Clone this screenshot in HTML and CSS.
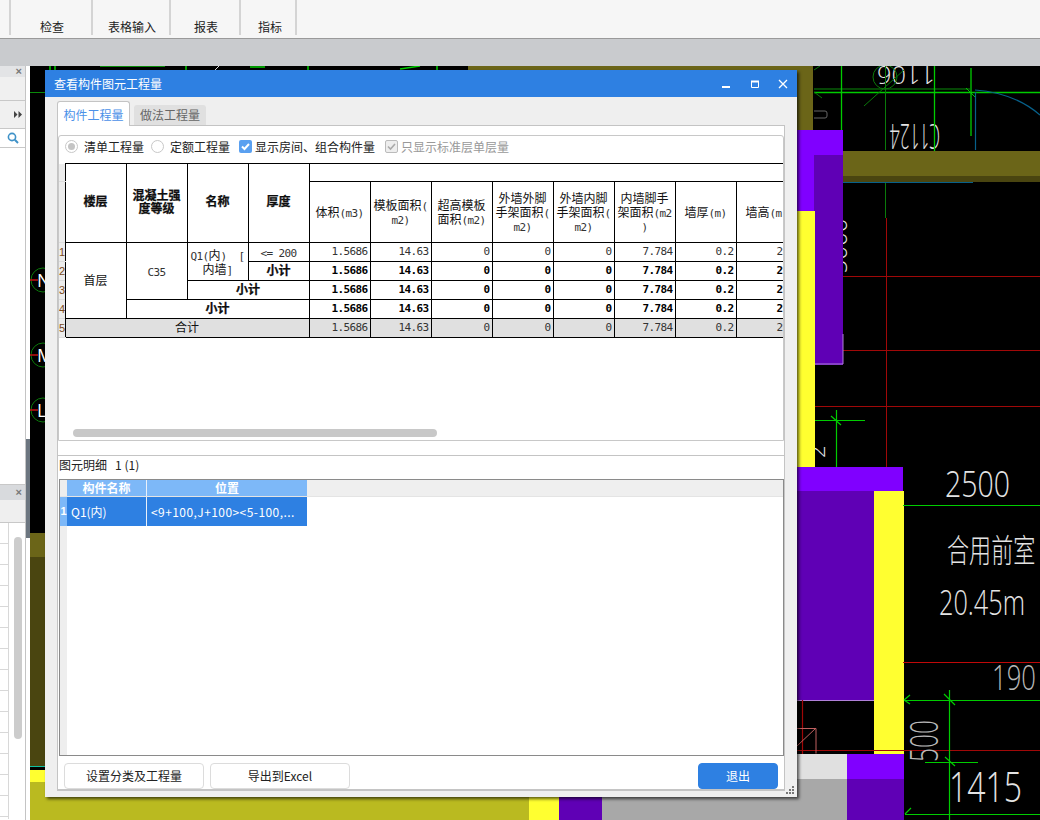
FILE: index.html
```html
<!DOCTYPE html>
<html lang="zh-CN">
<head>
<meta charset="utf-8">
<title>查看构件图元工程量</title>
<link rel="stylesheet" href="styles.css">
</head>
<body>
<div class="app">
  <header class="toolbar">
    <div class="tool-group g1">检查</div>
    <div class="tool-group g2">表格输入</div>
    <div class="tool-group g3">报表</div>
    <div class="tool-group g4">指标</div>
  </header>
  <div class="graybar"></div>
  <main class="workspace">
    <aside class="sidebar">
      <div class="side-top">
        <div class="side-head"><span class="side-x">×</span></div>
        <div class="side-blank"></div>
        <div class="side-arrows"><svg width="8" height="7" viewBox="0 0 8 7"><path d="M0 0l3.500 3.500L0 7zM4.500 0L8 3.500 4.500 7z" fill="#444"/></svg></div>
        <div class="side-search"><svg width="12" height="12" viewBox="0 0 12 12"><circle cx="5" cy="5" r="3.600" fill="none" stroke="#3f92c8" stroke-width="1.600"/><path d="M7.800 7.800l3.200 3.200" stroke="#3f92c8" stroke-width="2"/></svg></div>
      </div>
      <div class="side-bottom">
        <div class="side-head"><span class="side-x">×</span></div>
        <div class="side-blank2"></div>
        <div class="side-grid"><div class="side-thumb"></div></div>
      </div>
    </aside>
    <div class="strip"><div class="strip-handle"></div></div>
    <svg class="cad" viewBox="30 66 1010 754" width="1010" height="754">
      <rect x="30" y="66" width="1010" height="754" fill="#000"/>
      <!-- bottom-left fills -->
      <rect x="30" y="533" width="30" height="24" fill="#6b6518"/>
      <rect x="30" y="557" width="30" height="209" fill="#4a4510"/>
      <rect x="30" y="766" width="30" height="1" fill="#10c0a0"/>
      <rect x="30" y="770" width="30" height="12" fill="#ffff30"/>
      <rect x="30" y="782" width="500" height="38" fill="#baba20"/>
      <rect x="529" y="790" width="30" height="30" fill="#ffff30"/>
      <rect x="559" y="790" width="43" height="30" fill="#5f00b5"/>
      <rect x="602" y="779" width="245" height="41" fill="#a8a8a8"/>
      <rect x="780" y="754" width="67" height="25" fill="#e0e0e0"/>
      <!-- top strip -->
      <rect x="468" y="66" width="345" height="64" fill="#6b6518"/>
      <path d="M30 92.500h20M100 66.500h65" stroke="#0a8a0a" stroke-width="1"/>
      <path d="M50 66v4M55 66v4M186 66v4M308 66v4M437 66v4M250 67h15M400 69l20-3" stroke="#0c0" stroke-width="1.500"/>
      <path d="M215 70l4-4" stroke="#ddd"/>
      <!-- axis bubbles on the left -->
      <g fill="none" stroke="#0a7a0a" stroke-width="1">
        <circle cx="43" cy="280" r="12"/><circle cx="43" cy="355" r="12"/><circle cx="43" cy="410" r="12"/>
      </g>
      <path d="M30 280h8M30 355h8M30 410h8" stroke="#c01010" stroke-width="1.500"/>
      <g class="cad-l" font-size="18"><text x="37" y="287">N</text><text x="37" y="362">M</text><text x="37" y="417">L</text></g>
      <!-- top right linework -->
      <text class="cad-t" font-size="26" transform="rotate(180 906 75)" x="877" y="84" textLength="58" lengthAdjust="spacingAndGlyphs">1106</text>
      <text class="cad-t" font-size="34" transform="rotate(180 915 138)" x="890" y="152" textLength="50" lengthAdjust="spacingAndGlyphs">C1124</text>
      <path d="M814 89h156" stroke="#0a8a0a" stroke-width="1"/>
      <path d="M814 92.500h226M841.500 66v64M934.500 66v85M971 68v68" stroke="#0c0" stroke-width="1.300"/>
      <path d="M885.500 66v84M885.500 182v36M864 106l40-36M814 70l6-4M814 92l8 6" stroke="#0a7a0a" stroke-width="1"/>
      <circle cx="885" cy="77" r="12" fill="none" stroke="#0a7a0a"/>
      <path d="M966 88l10 10" stroke="#0c0"/>
      <path d="M975.500 92v58M975 90c28 2 50 12 65 25M843 182.500h130" fill="none" stroke="#07608a" stroke-width="1.200"/>
      <path d="M814 111h11a2 2 0 0 1 2 2v3a2 2 0 0 1-2 2h-11" fill="none" stroke="#666" stroke-width="1"/>
      <!-- red grid -->
      <path d="M843 276.500h197M843 350.500h197M815 406.500h225M886.500 218v249" stroke="#a00808" stroke-width="1"/>
      <path d="M836.500 410v57M815 420.500h50M831 416l10 9" stroke="#0c0" stroke-width="1.200"/>
      <text class="cad-t" font-size="24" transform="rotate(-90 847 246)" x="847" y="246" text-anchor="middle">5000</text>
      <text class="cad-t" font-size="22" transform="rotate(-90 825 458)" x="825" y="458">2</text>
      <!-- columns and walls -->
      <rect x="843" y="151" width="197" height="25" fill="#6b6518"/>
      <rect x="843" y="176" width="197" height="6" fill="#4a4510"/>
      <rect x="780" y="130" width="63" height="25" fill="#8000ff"/>
      <rect x="780" y="155" width="34" height="57" fill="#8000ff"/>
      <rect x="814" y="155" width="29" height="210" fill="#5f00b5"/>
      <path d="M815 364h28v-30" fill="none" stroke="#b080d8"/>
      <rect x="780" y="211" width="35" height="256" fill="#ffff30"/>
      <rect x="780" y="467" width="123" height="24" fill="#8000ff"/>
      <rect x="780" y="491" width="94" height="209" fill="#5f00b5"/>
      <path d="M780 700.500h95" stroke="#b080d8"/>
      <rect x="874" y="491" width="30" height="263" fill="#ffff30"/>
      <!-- lower linework -->
      <path d="M802.500 700v54M797 750.500h243" stroke="#a00808" stroke-width="1.200"/>
      <path d="M797 728.500h19v25M797 746l19-18" fill="none" stroke="#c06060"/>
      <path d="M903 662.500h137" stroke="#c00808" stroke-width="1.200"/>
      <path d="M903 505.500h137M904 700.500h136M949.500 690v130M925 762.500h53M905 814.500h135M944 694l11 11M945 757l10 9M904 700l6-5M904 700l6 4M905 814l6-6" stroke="#0c0" stroke-width="1.200" fill="none"/>
      <rect x="847" y="754" width="57" height="25" fill="#8000ff"/>
      <rect x="847" y="779" width="57" height="41" fill="#5f00b5"/>
      <!-- labels -->
      <text class="cad-t" font-size="36" x="945" y="497" textLength="65" lengthAdjust="spacingAndGlyphs">2500</text>
      <text class="cad-cn" font-size="23" transform="translate(947 562) scale(0.96 1.400)">合用前室</text>
      <text class="cad-t" font-size="34" x="939" y="615" textLength="86" lengthAdjust="spacingAndGlyphs">20.45m</text>
      <text class="cad-t dim" font-size="34" x="992" y="690" textLength="44" lengthAdjust="spacingAndGlyphs">190</text>
      <text class="cad-t dim" font-size="38" transform="rotate(-90 938 762)" x="938" y="762" textLength="42" lengthAdjust="spacingAndGlyphs">500</text>
      <text class="cad-t" font-size="42" x="949" y="802" textLength="73" lengthAdjust="spacingAndGlyphs">1415</text>
    </svg>
  </main>

  <section class="dialog">
    <div class="titlebar">
      <span class="title">查看构件图元工程量</span>
      <div class="win-btns">
        <svg width="10" height="10" viewBox="0 0 10 10"><path d="M0 8h8" stroke="#fff" stroke-width="2"/></svg>
        <svg width="10" height="10" viewBox="0 0 10 10"><path d="M1.500 2.500h7v6h-7z" fill="none" stroke="#fff"/><path d="M1 2.500h8" stroke="#fff" stroke-width="2"/></svg>
        <svg width="10" height="10" viewBox="0 0 10 10"><path d="M1 1l8 8M9 1L1 9" stroke="#fff" stroke-width="1.300"/></svg>
      </div>
    </div>
    <div class="dialog-body">
      <div class="tabs">
        <div class="tab active">构件工程量</div>
        <div class="tab">做法工程量</div>
      </div>
      <div class="outer">
        <div class="upper">
          <div class="options">
            <span class="radio on"></span><span class="opt o1">清单工程量</span>
            <span class="radio"></span><span class="opt o2">定额工程量</span>
            <span class="check"><svg width="13" height="13" viewBox="0 0 13 13"><path d="M3 6.500l2.500 2.500L10 4" fill="none" stroke="#fff" stroke-width="2"/></svg></span><span class="opt o3">显示房间、组合构件量</span>
            <span class="check off"><svg width="13" height="13" viewBox="0 0 13 13"><path d="M3 6.500l2.500 2.500L10 4" fill="none" stroke="#aaa" stroke-width="1.600"/></svg></span><span class="opt disabled">只显示标准层单层量</span>
          </div>
          <div class="table-wrap">
            <table class="qty">
              <colgroup><col class="c-rh"><col span="12" class="c-d"></colgroup>
              <thead>
                <tr class="r-top">
                  <th class="rh"></th>
                  <th rowspan="2" class="hb">楼层</th>
                  <th rowspan="2" class="hb">混凝土强<br>度等级</th>
                  <th rowspan="2" class="hb">名称</th>
                  <th rowspan="2" class="hb">厚度</th>
                  <th colspan="8"></th>
                </tr>
                <tr class="r-head">
                  <th class="rh"></th>
                  <th>体积<span class="lat">(m3)</span></th>
                  <th>模板面积<span class="lat">(</span><br><span class="lat">m2)</span></th>
                  <th>超高模板<br>面积<span class="lat">(m2)</span></th>
                  <th>外墙外脚<br>手架面积<span class="lat">(</span><br><span class="lat">m2)</span></th>
                  <th>外墙内脚<br>手架面积<span class="lat">(</span><br><span class="lat">m2)</span></th>
                  <th>内墙脚手<br>架面积<span class="lat">(m2</span><br><span class="lat">)</span></th>
                  <th>墙厚<span class="lat">(m)</span></th>
                  <th>墙高<span class="lat">(m)</span></th>
                </tr>
              </thead>
              <tbody>
                <tr>
                  <td class="rh">1</td>
                  <td rowspan="4" class="floor">首层</td>
                  <td rowspan="3" class="c"><span class="lat">C35</span></td>
                  <td rowspan="2" class="c name"><span class="lat">Q1(</span>内<span class="lat">)  [</span><br>内墙<span class="lat">]</span></td>
                  <td class="c"><span class="lat">&lt;= 200</span></td>
                  <td class="n">1.5686</td><td class="n">14.63</td><td class="n">0</td><td class="n">0</td><td class="n">0</td><td class="n">7.784</td><td class="n">0.2</td><td class="n">2.8</td>
                </tr>
                <tr class="sum">
                  <td class="rh">2</td>
                  <td class="c hb">小计</td>
                  <td class="n">1.5686</td><td class="n">14.63</td><td class="n">0</td><td class="n">0</td><td class="n">0</td><td class="n">7.784</td><td class="n">0.2</td><td class="n">2.8</td>
                </tr>
                <tr class="sum">
                  <td class="rh">3</td>
                  <td colspan="2" class="c hb">小计</td>
                  <td class="n">1.5686</td><td class="n">14.63</td><td class="n">0</td><td class="n">0</td><td class="n">0</td><td class="n">7.784</td><td class="n">0.2</td><td class="n">2.8</td>
                </tr>
                <tr class="sum">
                  <td class="rh">4</td>
                  <td colspan="3" class="c hb">小计</td>
                  <td class="n">1.5686</td><td class="n">14.63</td><td class="n">0</td><td class="n">0</td><td class="n">0</td><td class="n">7.784</td><td class="n">0.2</td><td class="n">2.8</td>
                </tr>
                <tr class="total">
                  <td class="rh">5</td>
                  <td colspan="4" class="c label">合计</td>
                  <td class="n">1.5686</td><td class="n">14.63</td><td class="n">0</td><td class="n">0</td><td class="n">0</td><td class="n">7.784</td><td class="n">0.2</td><td class="n">2.8</td>
                </tr>
              </tbody>
            </table>
          </div>
          <div class="hscroll"><div class="hthumb"></div></div>
        </div>
        <div class="lower">
          <div class="lower-label">图元明细&nbsp;&nbsp; 1 (1)</div>
          <div class="detail">
            <div class="d-head">
              <div class="d-rh"></div>
              <div class="d-c1">构件名称</div>
              <div class="d-c2">位置</div>
            </div>
            <div class="d-row">
              <div class="d-rh sel">1</div>
              <div class="d-c1 l">Q1(内)</div>
              <div class="d-c2 l pos">&lt;9+100,J+100&gt;&lt;5-100,...</div>
            </div>
            <div class="d-fill"><div class="d-rh"></div></div>
          </div>
        </div>
        <div class="footer">
          <button class="btn">设置分类及工程量</button>
          <button class="btn">导出到Excel</button>
          <button class="btn primary">退出</button>
        </div>
      </div>
    </div>
    <svg class="grip" width="9" height="9" viewBox="0 0 9 9"><path d="M6 0h2v2H6zM3 3h2v2H3zM6 3h2v2H6zM0 6h2v2H0zM3 6h2v2H3zM6 6h2v2H6z" fill="#777"/></svg>
  </section>
</div>
</body>
</html>
```
FILE: styles.css
```css
* { box-sizing: border-box; }
html, body { margin: 0; padding: 0; }
body { font-family: "Noto Sans CJK SC", "Noto Sans", sans-serif; font-size: 12px; color: #222; }
.app { position: relative; width: 1040px; height: 820px; overflow: hidden; display: flex; flex-direction: column; background: #fff; }

/* toolbar */
.toolbar { height: 39px; flex: none; display: flex; padding-left: 9px; background: #f6f6f6; border-bottom: 1px solid #9a9a9a; }
.tool-group { height: 35px; border-left: 2px solid #d4d4d4; padding-left: 2px; display: flex; align-items: flex-end; justify-content: center; line-height: 16px; color: #222; }
.g1 { width: 82px; } .g2 { width: 78px; } .g3 { width: 70px; }
.g4 { width: 58px; border-right: 2px solid #d4d4d4; padding-left: 4px; }
.graybar { height: 27px; flex: none; background: #c9cbce; }
.workspace { flex: 1; display: flex; min-height: 0; }

/* sidebar */
.sidebar { width: 26px; flex: none; display: flex; flex-direction: column; border-right: 1px solid #c4c4c4; background: #fff; }
.side-top { height: 418px; flex: none; }
.side-head { height: 11px; background: #e3e4e6; display: flex; justify-content: flex-end; align-items: center; padding-right: 3px; }
.side-x { font: bold 11px/11px "Liberation Sans", sans-serif; color: #777; }
.side-blank { height: 24px; background: #f0f0f0; border-bottom: 1px solid #c8c8c8; }
.side-arrows { height: 28px; background: #f0f0f0; border-bottom: 1px solid #c8c8c8; display: flex; align-items: center; justify-content: flex-end; padding-right: 3px; }
.side-search { height: 19px; background: #fff; border-bottom: 1px solid #c8c8c8; display: flex; align-items: center; justify-content: flex-end; padding-right: 6px; }
.side-bottom { flex: 1; border-top: 1px solid #c8c8c8; }
.side-bottom .side-head { height: 15px; background: #d8dadd; }
.side-blank2 { height: 23px; background: #efefef; border-bottom: 1px solid #c8c8c8; }
.side-grid { position: relative; height: 296px; background: repeating-linear-gradient(to bottom, transparent 0, transparent 20px, #d8d8d8 20px, #d8d8d8 21px) 0 0 / 8px 100% no-repeat, linear-gradient(#d8d8d8, #d8d8d8) 8px 0 / 1px 100% no-repeat; }
.side-thumb { position: absolute; left: 14px; top: 14px; width: 8px; height: 202px; border-radius: 4px; background: #cccccc; }
.strip { width: 4px; flex: none; background: #fff; position: relative; }
.strip-handle { position: absolute; left: 0; top: 373px; width: 4px; height: 99px; background: #6c7680; }
.cad { display: block; flex: none; }
.cad-t { font-family: "Open Sans", "Liberation Sans", sans-serif; font-weight: 300; fill: #e4e4e4; }
.cad-t.dim { fill: #b8b8b8; }
.cad-l { font-family: "Open Sans", "Liberation Sans", sans-serif; fill: #fff; }
.cad-cn { font-family: "Noto Sans CJK SC", sans-serif; font-weight: 300; fill: #e4e4e4; }

/* dialog */
.dialog { position: absolute; left: 45px; top: 70px; width: 752px; height: 727px; background: #efefef; box-shadow: 2px 2px 3px rgba(0, 0, 0, .65); display: flex; flex-direction: column; }
.titlebar { height: 27px; flex: none; background: #2e80e2; color: #fff; display: flex; align-items: center; justify-content: space-between; padding: 0 9px; }
.title { line-height: 27px; font-size: 12px; }
.win-btns { display: flex; gap: 18px; }
.dialog-body { flex: 1; padding: 4px 12px 0; display: flex; flex-direction: column; min-height: 0; }
.tabs { height: 25px; flex: none; display: flex; align-items: flex-end; gap: 4px; position: relative; z-index: 1; margin-bottom: -1px; }
.tab { width: 72px; height: 20px; background: #e0e0e0; color: #666; border-radius: 3px 3px 0 0; text-align: center; line-height: 20px; margin-bottom: 1px; }
.tab.active { width: 73px; height: 25px; line-height: 25px; margin-bottom: 0; background: #fff; color: #4a90e8; border: 1px solid #c4c4c4; border-bottom: 0; }
.outer { height: 666px; flex: none; background: #fff; border: 1px solid #c4c4c4; border-width: 1px 1px 2px 1px; padding: 9px 0 0; display: flex; flex-direction: column; }

/* upper panel */
.upper { height: 306px; flex: none; border: 1px solid #c8c8c8; border-radius: 3px 3px 0 0; display: flex; flex-direction: column; background: #fff; }
.options { height: 27px; flex: none; display: flex; align-items: center; padding: 0 0 6px 6px; }
.radio { width: 13px; height: 13px; border-radius: 50%; border: 1px solid #c8c8c8; background: #fff; flex: none; position: relative; }
.radio.on::after { content: ""; position: absolute; left: 2px; top: 2px; width: 7px; height: 7px; border-radius: 50%; background: #c4c4c4; }
.opt { margin-left: 6px; line-height: 16px; }
.o1 { margin-right: 7px; }
.o2 { margin-right: 9px; }
.o3 { margin-left: 3px; margin-right: 10px; }
.check { width: 13px; height: 13px; border-radius: 2px; background: #5aa0f0; flex: none; display: block; }
.check svg { display: block; }
.check.off { background: #eee; border: 1px solid #bbb; }
.check.off svg { margin: -1px; }
.opt.disabled { margin-left: 3px; color: #999; }
.table-wrap { flex: 1; overflow: hidden; min-height: 0; }
.qty { border-collapse: collapse; table-layout: fixed; width: 738px; font-size: 12px; color: #111; }
.c-rh { width: 6px; } .c-d { width: 61px; }
.qty th, .qty td { border: 1px solid #000; padding: 0; font-weight: normal; overflow: hidden; white-space: nowrap; text-align: center; line-height: 14px; }
.qty .hb { font-weight: bold; line-height: 13px; padding-bottom: 3px; -webkit-text-stroke: .25px #000; }
.qty thead .hb { padding-bottom: 5px; }
.qty .floor, .qty .label { padding-bottom: 2px; }
.qty .rh { border: 0; border-bottom: 1px solid #dcdcdc; border-right: 1px solid #000; background: #ececec; font: 11px/14px "Liberation Sans", sans-serif; color: #7a4a20; text-align: left; }
.r-top { height: 18px; } .r-head { height: 61px; }
.qty tbody tr { height: 19px; }
.lat { font: 11px/10px "DejaVu Sans Mono", monospace; letter-spacing: -.62px; color: #333; white-space: pre; }
.qty .n { font: 11px/14px "DejaVu Sans Mono", monospace; letter-spacing: -.62px; color: #333; text-align: right; padding-right: 2px; }
.qty .sum .n { font-weight: bold; color: #000; }
.total td { background: #e0e0e0; }
.qty .total .rh { background: #ececec; }
.hscroll { height: 8px; flex: none; margin: 0 0 3px 14px; }
.hthumb { width: 364px; height: 8px; border-radius: 4px; background: #c8c8c8; }

/* lower panel */
.lower { height: 301px; flex: none; margin-top: 14px; border-top: 1px solid #c4c4c4; padding-left: 1px; display: flex; flex-direction: column; }
.lower-label { height: 23px; flex: none; line-height: 18px; color: #222; }
.detail { flex: 1; border: 1px solid #8a8a8a; display: flex; flex-direction: column; min-height: 0; }
.d-head { height: 17px; flex: none; display: flex; background: #efefef; border-bottom: 1px solid #e4e4e4; }
.d-row { height: 29px; flex: none; display: flex; }
.d-rh { width: 7px; flex: none; background: #eeeeee; }
.d-rh.sel { background: #7db8f8; color: #fff; font: bold 11px/29px "Liberation Sans", sans-serif; text-align: center; }
.d-c1 { width: 80px; flex: none; border-right: 1px solid #e8f0fa; text-align: center; }
.d-c2 { width: 160px; flex: none; text-align: center; }
.d-head .d-c1, .d-head .d-c2 { background: #7db8f8; color: #fff; font-weight: bold; line-height: 16px; }
.d-row .l { background: #2e80e2; color: #fff; text-align: left; line-height: 29px; padding-left: 4px; white-space: nowrap; overflow: hidden; }
.d-row .pos { letter-spacing: .43px; }
.d-fill { flex: 1; display: flex; }
.d-fill .d-rh { height: 100%; }

/* footer */
.footer { flex: 1; display: flex; align-items: flex-end; gap: 6px; padding: 0 6px; min-height: 0; }
.btn { font: 12px/24px "Noto Sans CJK SC", sans-serif; width: 140px; height: 26px; padding: 0; background: #fff; border: 1px solid #dcdcdc; border-radius: 4px; color: #222; }
.btn.primary { width: 80px; margin-left: auto; background: #2e80e2; border-color: #2e80e2; color: #fff; }
.grip { position: absolute; right: 2px; bottom: 2px; }
```
